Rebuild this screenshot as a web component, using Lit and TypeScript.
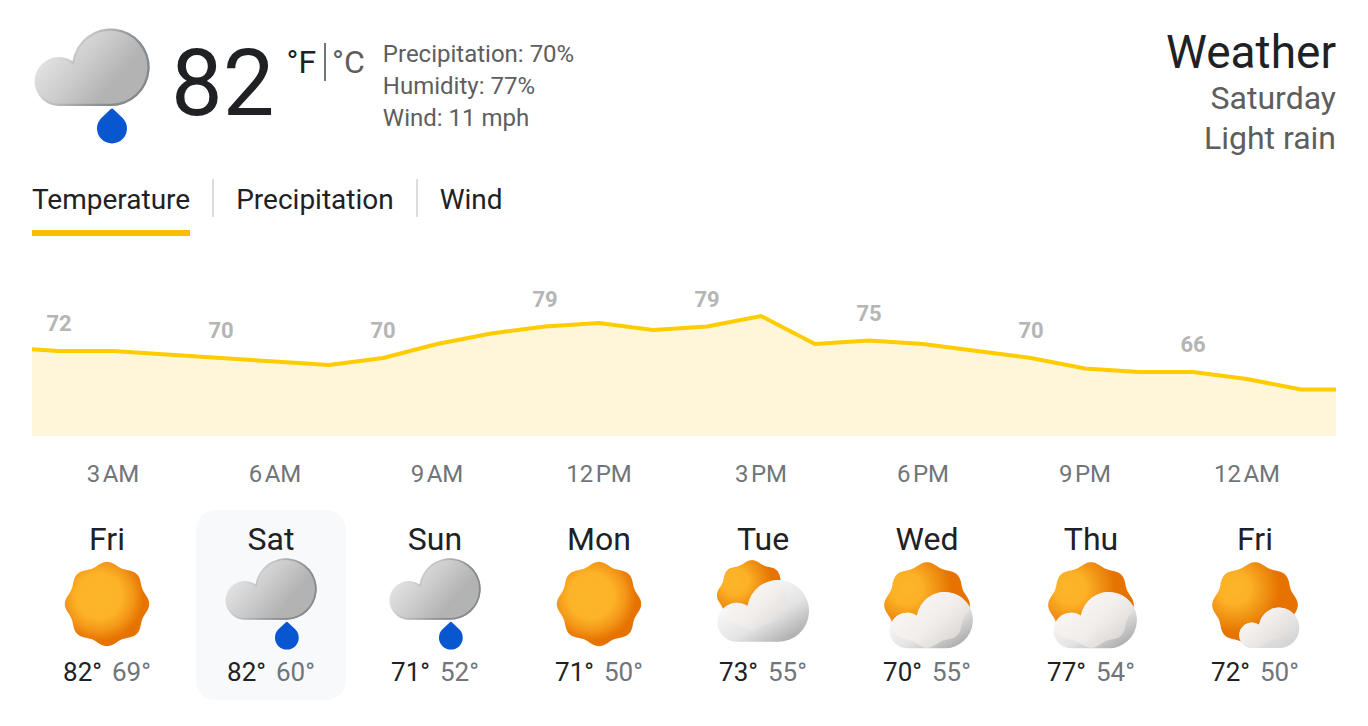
import { LitElement, html, svg, css } from "lit";
import { customElement, property, state } from "lit/decorators.js";
import { classMap } from "lit/directives/class-map.js";

type Sky = "rain" | "sunny" | "mostly-cloudy" | "partly-cloudy" | "mostly-sunny";

interface Day {
  name: string;
  sky: Sky;
  label: string;
  high: number;
  low: number;
}

const DAYS: Day[] = [
  { name: "Fri", sky: "sunny", label: "Sunny", high: 82, low: 69 },
  { name: "Sat", sky: "rain", label: "Light rain", high: 82, low: 60 },
  { name: "Sun", sky: "rain", label: "Light rain", high: 71, low: 52 },
  { name: "Mon", sky: "sunny", label: "Sunny", high: 71, low: 50 },
  { name: "Tue", sky: "mostly-cloudy", label: "Mostly cloudy", high: 73, low: 55 },
  { name: "Wed", sky: "partly-cloudy", label: "Partly cloudy", high: 70, low: 55 },
  { name: "Thu", sky: "partly-cloudy", label: "Partly cloudy", high: 77, low: 54 },
  { name: "Fri", sky: "mostly-sunny", label: "Mostly sunny", high: 72, low: 50 },
];

const TEMPS = [
  73, 72, 72, 71, 70, 69, 68, 70, 74, 77, 79, 80, 78, 79, 82, 74, 75, 74, 72, 70, 67, 66, 66, 64,
  61, 61,
];
const HOURS = ["3 AM", "6 AM", "9 AM", "12 PM", "3 PM", "6 PM", "9 PM", "12 AM"];

const CLOUD = "M25.2 78A24.5 24.5 0 1 1 39 33A38.8 38.8 0 1 1 76.7 78Z";
const DROP = "M77.3 81Q78.5 79.9 79.7 81L89.1 89.9A15 15 0 1 1 67.9 89.9Z";

/* Eight-lobed disc around the origin. */
const SUN = (() => {
  const points: string[] = [];
  for (let i = 0; i < 180; i++) {
    const a = (i * Math.PI) / 90;
    const r = 40.3 + 1.9 * Math.cos(8 * a);
    points.push(`${(r * Math.cos(a)).toFixed(2)} ${(r * Math.sin(a)).toFixed(2)}`);
  }
  return `M${points.join("L")}Z`;
})();

const MIXED: Record<string, { sun: string; cloud: string; haze: number; shade: string }> = {
  "mostly-cloudy": {
    sun: "translate(35 37.3) scale(.834)",
    cloud: "translate(-.5 21.7) scale(.797)",
    haze: 0.75,
    shade: "#a9a9a9",
  },
  "partly-cloudy": {
    sun: "translate(46 47) scale(1.015)",
    cloud: "translate(7.7 33.7) scale(.725)",
    haze: 0.85,
    shade: "#a9a9a9",
  },
  "mostly-sunny": {
    sun: "translate(46 47) scale(1.015)",
    cloud: "translate(29.7 49.4) scale(.522)",
    haze: 0.8,
    shade: "#d0d0d0",
  },
};

@customElement("weather-icon")
export class WeatherIcon extends LitElement {
  @property() sky: Sky = "sunny";
  @property() label = "";

  static styles = css`
    :host {
      display: block;
    }
    .art {
      display: block;
      width: 100%;
      height: 100%;
    }
  `;

  private rain() {
    return html`<svg class="art" viewBox="0.5 0 116 116" role="img" aria-label=${this.label}>
      <defs>
        <linearGradient id="body" gradientUnits="userSpaceOnUse" x1="14" y1="26" x2="72" y2="76">
          <stop offset="0" stop-color="#e2e2e2" />
          <stop offset=".45" stop-color="#cccccc" />
          <stop offset=".9" stop-color="#b3b3b3" />
        </linearGradient>
        <linearGradient id="rim" gradientUnits="userSpaceOnUse" x1="24" y1="30" x2="84" y2="62">
          <stop offset="0" stop-color="#8a8f93" stop-opacity="0" />
          <stop offset=".5" stop-color="#8a8f93" stop-opacity=".45" />
          <stop offset="1" stop-color="#858a8e" />
        </linearGradient>
        <clipPath id="edge"><path d=${CLOUD} /></clipPath>
      </defs>
      <path d=${CLOUD} fill="url(#body)" />
      <path d=${CLOUD} fill="none" stroke="url(#rim)" stroke-width="4.6" clip-path="url(#edge)" />
      <path d=${DROP} fill="#0957d0" />
    </svg>`;
  }

  private sunny() {
    return html`<svg class="art" viewBox="0 0 92 92" role="img" aria-label=${this.label}>
      <defs>
        <radialGradient id="glow" gradientUnits="userSpaceOnUse" cx="-8" cy="-8" r="45">
          <stop offset="0" stop-color="#fdb528" />
          <stop offset=".5" stop-color="#fdb327" />
          <stop offset=".75" stop-color="#f4981a" />
          <stop offset="1" stop-color="#e67300" />
        </radialGradient>
      </defs>
      <path d=${SUN} fill="url(#glow)" transform="translate(46 46)" />
    </svg>`;
  }

  private mixed() {
    const m = MIXED[this.sky];
    return html`<svg class="art" viewBox="0 0 92 92" role="img" aria-label=${this.label}>
      <defs>
        <radialGradient id="glow" gradientUnits="userSpaceOnUse" cx="-20" cy="-16" r="44">
          <stop offset="0" stop-color="#fdb528" />
          <stop offset=".35" stop-color="#fcb126" />
          <stop offset=".68" stop-color="#f09214" />
          <stop offset="1" stop-color="#e67300" />
        </radialGradient>
        <linearGradient id="body" gradientUnits="userSpaceOnUse" x1="44" y1="14" x2="86" y2="84">
          <stop offset="0" stop-color="#f8f8f8" />
          <stop offset=".5" stop-color="#e4e4e4" />
          <stop offset="1" stop-color=${m.shade} />
        </linearGradient>
        <linearGradient id="haze" gradientUnits="userSpaceOnUse" x1="-20" y1="-10" x2="32" y2="40">
          <stop offset="0" stop-color="#fbf5f2" />
          <stop offset=".5" stop-color="#f4efec" />
          <stop offset="1" stop-color="#dcd9d7" />
        </linearGradient>
        <clipPath id="edge"><path d=${CLOUD} transform=${m.cloud} /></clipPath>
      </defs>
      <path d=${SUN} fill="url(#glow)" transform=${m.sun} />
      <path d=${CLOUD} fill="url(#body)" transform=${m.cloud} />
      <g clip-path="url(#edge)">
        <path d=${SUN} fill="url(#haze)" fill-opacity=${m.haze} transform=${m.sun} />
      </g>
    </svg>`;
  }

  render() {
    if (this.sky === "rain") return this.rain();
    if (this.sky === "sunny") return this.sunny();
    return this.mixed();
  }
}

@customElement("temperature-chart")
export class TemperatureChart extends LitElement {
  static styles = css`
    :host {
      display: block;
      font-family: Roboto, Arial, sans-serif;
    }
    .plot {
      display: block;
      width: 100%;
      height: auto;
    }
    .area {
      fill: #fff5d8;
    }
    .line {
      fill: none;
      stroke: #fc0;
      stroke-width: 4px;
    }
    .value {
      fill: #b5b5b5;
      font-size: 22px;
      font-weight: 700;
      text-anchor: middle;
    }
    .hour {
      fill: #70757a;
      font-size: 24px;
      text-anchor: middle;
    }
  `;

  render() {
    const x = (i: number) => 54 * i - 27;
    const y = (t: number) => 82 - (t - 70) * 3.5;
    const line = TEMPS.map((t, i) => `${x(i)},${y(t)}`).join(" ");
    const last = x(TEMPS.length - 1);
    return html`<svg class="plot" viewBox="0 0 1304 214" role="img" aria-label="Hourly temperature">
      <polygon class="area" points="${x(0)},160 ${line} ${last},160" />
      <polyline class="line" points=${line} />
      ${TEMPS.map((t, i) =>
        i % 3 === 1 && i < 23
          ? svg`<text class="value" x=${x(i)} y=${y(t) - 20}>${t}</text>`
          : null
      )}
      ${HOURS.map(
        (h, i) => svg`<text class="hour" x=${81 + 162 * i} y="206">${h.replace(" ", "\u200a")}</text>`
      )}
    </svg>`;
  }
}

@customElement("app-root")
export class AppRoot extends LitElement {
  @state() private tab = "Temperature";
  @state() private day = 1;

  static styles = css`
    :host {
      display: block;
      font-family: Roboto, Arial, sans-serif;
      color: #202124;
      background: #fff;
    }
    .page {
      padding: 28px 32px 26px;
    }
    button {
      font: inherit;
      color: inherit;
      background: none;
      border: 0;
      margin: 0;
      padding: 0;
      cursor: pointer;
    }
    .top {
      display: flex;
      justify-content: space-between;
    }
    .now {
      display: flex;
      align-items: flex-start;
      padding-left: 2px;
    }
    .now-icon {
      width: 116px;
      height: 116px;
    }
    .degrees {
      margin-left: 21px;
      font-size: 92px;
      line-height: 112px;
    }
    .units {
      display: flex;
      margin: 15px 0 0 12px;
      font-size: 32px;
      line-height: 38px;
    }
    .unit {
      color: #5e5e5e;
      padding-left: 6px;
    }
    .unit.on {
      color: #202124;
      padding: 0 8px 0 0;
      border-right: 2px solid #70757a;
    }
    .details {
      margin: 10px 0 0 18px;
      font-size: 24px;
      line-height: 32px;
      color: #5e5e5e;
    }
    .place {
      text-align: right;
      font-size: 32px;
      line-height: 40px;
      color: #5e5e5e;
    }
    .title {
      margin: 0 0 2px;
      font-size: 46px;
      line-height: 48px;
      font-weight: 400;
      color: #202124;
    }
    .tabs {
      display: flex;
      margin-top: 21px;
      font-size: 28px;
      line-height: 38px;
    }
    .tab {
      padding: 2px 0 11px;
      border-bottom: 6px solid transparent;
      line-height: 38px;
    }
    .tab.on {
      border-color: #fbbc04;
    }
    .rule {
      width: 2px;
      height: 38px;
      margin: 0 22px;
      background: #dadce0;
    }
    .chart {
      margin-top: 40px;
    }
    .days {
      display: grid;
      grid-template-columns: repeat(8, 1fr);
      gap: 14px;
      margin-top: 20px;
      padding-right: 6px;
    }
    .day {
      display: flex;
      flex-direction: column;
      align-items: center;
      padding: 10px 0;
      border-radius: 20px;
    }
    .day.on {
      background: #f8f9fb;
    }
    .name {
      font-size: 32px;
      line-height: 38px;
    }
    .day-icon {
      width: 92px;
      height: 92px;
    }
    .range {
      display: flex;
      gap: 10px;
      margin-top: 4px;
      font-size: 26px;
      line-height: 36px;
    }
    .low {
      color: #70757a;
    }
  `;

  private tabButton(name: string) {
    return html`<button
      class=${classMap({ tab: true, on: this.tab === name })}
      role="tab"
      aria-selected=${this.tab === name ? "true" : "false"}
      @click=${() => (this.tab = name)}
    >${name}</button>`;
  }

  render() {
    return html`<main class="page">
      <header class="top">
        <section class="now">
          <weather-icon class="now-icon" sky="rain" label="Light rain"></weather-icon>
          <div class="degrees">82</div>
          <div class="units">
            <button class="unit on" aria-label="Fahrenheit">°F</button>
            <button class="unit" aria-label="Celsius">°C</button>
          </div>
          <div class="details">
            <div>Precipitation: 70%</div>
            <div>Humidity: 77%</div>
            <div>Wind: 11 mph</div>
          </div>
        </section>
        <section class="place">
          <h1 class="title">Weather</h1>
          <div>Saturday</div>
          <div>Light rain</div>
        </section>
      </header>
      <nav class="tabs" role="tablist">
        ${this.tabButton("Temperature")}
        <span class="rule"></span>
        ${this.tabButton("Precipitation")}
        <span class="rule"></span>
        ${this.tabButton("Wind")}
      </nav>
      <temperature-chart class="chart"></temperature-chart>
      <section class="days">
        ${DAYS.map(
          (d, i) => html`<button
            class=${classMap({ day: true, on: this.day === i })}
            @click=${() => (this.day = i)}
          >
            <span class="name">${d.name}</span>
            <weather-icon class="day-icon" sky=${d.sky} label=${d.label}></weather-icon>
            <span class="range"><span>${d.high}°</span><span class="low">${d.low}°</span></span>
          </button>`
        )}
      </section>
    </main>`;
  }
}
